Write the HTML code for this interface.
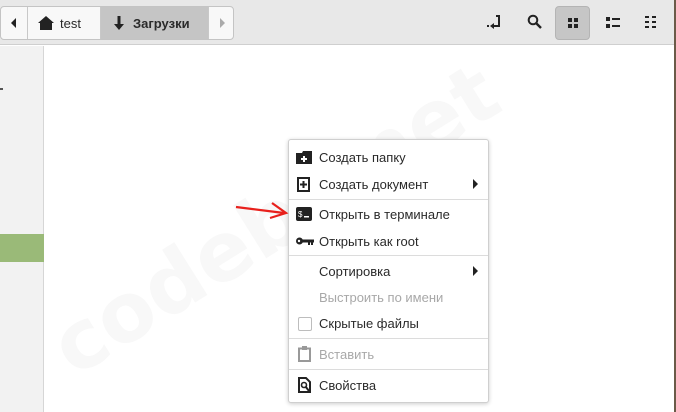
<!DOCTYPE html>
<html><head><meta charset="utf-8"><style>
*{margin:0;padding:0;box-sizing:border-box}
html,body{width:676px;height:412px;overflow:hidden}
body{background:#fff;font-family:"Liberation Sans","DejaVu Sans",sans-serif;font-size:13px;color:#2a2a2a;position:relative}
.tb{position:absolute;left:0;top:0;width:676px;height:45px;background:#e8e8e8;border-bottom:1px solid #cfcfcf}
.side{position:absolute;left:0;top:46px;width:44px;height:366px;background:#f2f2f2;border-right:1px solid #d6d6d6}
.sel{position:absolute;left:0;top:234px;width:44px;height:28px;background:#9aba78}
.bc{position:absolute;left:0;top:6px;height:34px;width:234px;border:1px solid #c4c4c4;border-radius:4px;background:#f8f8f8;overflow:hidden}
.seg{position:absolute;top:0;height:32px;display:flex;align-items:center;border-right:1px solid #c8c8c8}
.btn{position:absolute;top:6px;width:35px;height:34px;border-radius:4px}
.menu{position:absolute;left:288px;top:139px;width:201px;height:264px;background:#fff;border:1px solid #cfcfcf;border-radius:3px;box-shadow:0 1px 4px rgba(0,0,0,.2)}
.it{position:absolute;left:30px;font-size:13px;color:#2a2a2a}
.g{color:#a8a8a8}
.sep{position:absolute;left:0;width:199px;height:1px;background:#dcdcdc}
.ic{position:absolute;left:7px}
.wm{position:absolute;font-size:82px;font-weight:bold;color:#f8f8f8;white-space:nowrap;font-family:"DejaVu Sans",sans-serif}
</style></head><body>
<div class="tb"></div>
<div class="side"><div style="position:absolute;left:0;top:42px;width:3px;height:2px;background:#555"></div></div>
<div class="sel"></div>
<div style="position:absolute;left:674px;top:0;width:2px;height:412px;background:#6b5a48"></div>
<div class="wm" style="left:85px;top:300px;transform:rotate(-32deg);transform-origin:left bottom">codeby.net</div>
<div class="bc">
 <div class="seg" style="left:0;width:27px;justify-content:center"><svg width="8" height="10"><path d="M6 0L1 5L6 10Z" fill="#222"/></svg></div>
 <div class="seg" style="left:27px;width:73px;padding-left:10px"><svg width="16" height="14"><path d="M8 0L0 7H2V14H14V7H16Z" fill="#222"/></svg><span style="margin-left:6px">test</span></div>
 <div class="seg" style="left:100px;width:108px;padding-left:12px;background:#c5c5c5"><svg width="12" height="14"><path d="M4.5 0H7.5V8H11L6 14L1 8H4.5Z" fill="#222"/></svg><b style="margin-left:8px">Загрузки</b></div>
 <div class="seg" style="left:208px;width:26px;border:none;justify-content:center"><svg width="8" height="10"><path d="M2 0L7 5L2 10Z" fill="#aaa"/></svg></div>
</div>
<svg style="position:absolute;left:487px;top:15px" width="16" height="14"><path d="M9 1H12V11H5" fill="none" stroke="#222" stroke-width="2"/><path d="M7 8L3 11L7 14Z" fill="#222"/><rect x="0" y="10" width="2" height="2" fill="#222"/></svg>
<svg style="position:absolute;left:527px;top:14px" width="16" height="16"><circle cx="6" cy="6" r="4.3" fill="none" stroke="#222" stroke-width="2"/><path d="M9 9L14 14" stroke="#222" stroke-width="2.4"/></svg>
<div class="btn" style="left:555px;background:#c6c6c6;border:1px solid #b4b4b4"></div>
<svg style="position:absolute;left:568px;top:18px" width="10" height="10" fill="#222"><rect x="0" y="0" width="4" height="4"/><rect x="6" y="0" width="4" height="4"/><rect x="0" y="6" width="4" height="4"/><rect x="6" y="6" width="4" height="4"/></svg>
<svg style="position:absolute;left:606px;top:17px" width="14" height="11" fill="#222"><rect x="0" y="0" width="4" height="4"/><rect x="6" y="1" width="8" height="2"/><rect x="0" y="7" width="4" height="4"/><rect x="6" y="8" width="8" height="2"/></svg>
<svg style="position:absolute;left:645px;top:16px" width="14" height="13" fill="#222"><rect x="0" y="0" width="4" height="2"/><rect x="7" y="0" width="4" height="2"/><rect x="0" y="5" width="4" height="2"/><rect x="7" y="5" width="4" height="2"/><rect x="0" y="10" width="4" height="2"/><rect x="7" y="10" width="4" height="2"/></svg>
<div class="menu">
 <svg class="ic" style="top:11px" width="16" height="13"><path d="M0 2H6L7 0H16V13H0Z" fill="#222"/><path d="M7 5H9V7H11V9H9V11H7V9H5V7H7Z" fill="#fff"/></svg>
 <div class="it" style="top:10px">Создать папку</div>
 <svg class="ic" style="top:37px;left:8px" width="13" height="15"><rect x="1" y="1" width="11" height="13" fill="none" stroke="#222" stroke-width="2"/><path d="M5.5 4H7.5V6.5H10V8.5H7.5V11H5.5V8.5H3V6.5H5.5Z" fill="#222"/></svg>
 <div class="it" style="top:37px">Создать документ</div>
 <svg style="position:absolute;left:184px;top:39px" width="6" height="10"><path d="M0 0L5 5L0 10Z" fill="#222"/></svg>
 <div class="sep" style="top:59px"></div>
 <svg class="ic" style="top:67px" width="16" height="14"><rect width="16" height="14" rx="2" fill="#222"/><text x="2" y="10" font-size="8" fill="#fff" font-family="Liberation Sans">$</text><rect x="8" y="9" width="5" height="1.5" fill="#fff"/></svg>
 <div class="it" style="top:67px">Открыть в терминале</div>
 <svg class="ic" style="top:97px" width="18" height="8"><circle cx="3.5" cy="4" r="3.5" fill="#222"/><rect x="5" y="2.5" width="13" height="3" fill="#222"/><rect x="12" y="5" width="2" height="3" fill="#222"/><rect x="15" y="5" width="2" height="3" fill="#222"/><circle cx="3" cy="4" r="1.2" fill="#fff"/></svg>
 <div class="it" style="top:94px">Открыть как root</div>
 <div class="sep" style="top:115px"></div>
 <div class="it" style="top:124px">Сортировка</div>
 <svg style="position:absolute;left:184px;top:126px" width="6" height="10"><path d="M0 0L5 5L0 10Z" fill="#222"/></svg>
 <div class="it g" style="top:150px">Выстроить по имени</div>
 <div style="position:absolute;left:9px;top:177px;width:14px;height:14px;border:1px solid #bdbdbd;border-radius:2px"></div>
 <div class="it" style="top:176px">Скрытые файлы</div>
 <div class="sep" style="top:198px"></div>
 <svg class="ic" style="top:206px;left:9px" width="13" height="16"><rect x="1" y="2.5" width="11" height="12.5" fill="none" stroke="#999" stroke-width="2"/><rect x="4" y="0" width="5" height="4" fill="#999"/></svg>
 <div class="it g" style="top:207px">Вставить</div>
 <div class="sep" style="top:229px"></div>
 <svg class="ic" style="top:237px;left:9px" width="13" height="16"><path d="M1 1H8L12 5V15H1Z" fill="none" stroke="#222" stroke-width="2"/><circle cx="6" cy="8" r="2.5" fill="none" stroke="#222" stroke-width="1.6"/><path d="M7.5 9.5L11 14" stroke="#222" stroke-width="2"/></svg>
 <div class="it" style="top:238px">Свойства</div>
</div>
<svg style="position:absolute;left:234px;top:200px" width="58" height="20"><path d="M2 7L50 13" stroke="#e8201c" stroke-width="2.2"/><path d="M38 3L52 13L36 18" fill="none" stroke="#e8201c" stroke-width="2.2"/></svg>
</body></html>
